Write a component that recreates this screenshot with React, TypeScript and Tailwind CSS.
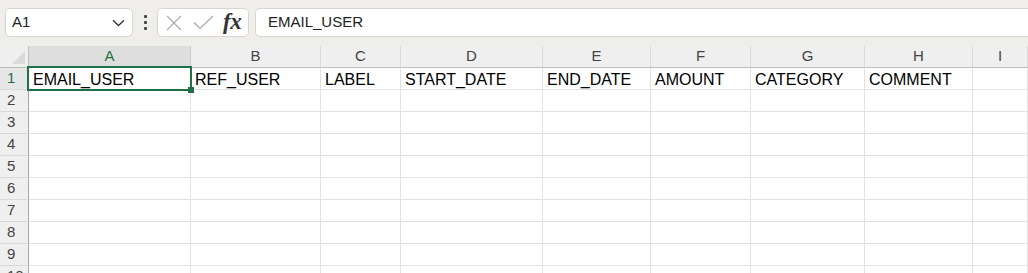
import React from "react";

const cols = [
  { key: "A", w: "w-[162px]" },
  { key: "B", w: "w-[130px]" },
  { key: "C", w: "w-[80px]" },
  { key: "D", w: "w-[142px]" },
  { key: "E", w: "w-[108px]" },
  { key: "F", w: "w-[100px]" },
  { key: "G", w: "w-[114px]" },
  { key: "H", w: "w-[108px]" },
  { key: "I", w: "flex-1" },
];

const headerRow = ["EMAIL_USER", "REF_USER", "LABEL", "START_DATE", "END_DATE", "AMOUNT", "CATEGORY", "COMMENT", ""];

function Toolbar() {
  return (
    <div className="h-[46px] bg-[#f0eeeb] flex items-start pt-[8px] pl-[5px]">
      <div className="w-[128px] h-[29px] bg-white border border-[#d9d6d2] rounded-[5px] flex items-center justify-between pl-[6px] pr-[7px]">
        <span className="text-[15px] text-[#222]">A1</span>
        <svg width="13" height="8" viewBox="0 0 13 8" fill="none">
          <path d="M1 1.2 L6.5 6.5 L12 1.2" stroke="#333" strokeWidth="1.3" />
        </svg>
      </div>
      <div className="w-[24px] h-[29px] flex flex-col items-center justify-center gap-[3px]">
        <span className="w-[3px] h-[3px] bg-[#444] rounded-[1px]"></span>
        <span className="w-[3px] h-[3px] bg-[#444] rounded-[1px]"></span>
        <span className="w-[3px] h-[3px] bg-[#444] rounded-[1px]"></span>
      </div>
      <div className="w-[92px] h-[29px] bg-white border border-[#d9d6d2] rounded-[5px] flex items-center pl-[8px]">
        <svg width="16" height="16" viewBox="0 0 16 16" fill="none">
          <path d="M1 1 L15 15 M15 1 L1 15" stroke="#ababab" strokeWidth="1.2" />
        </svg>
        <svg className="ml-[11px]" width="21" height="15" viewBox="0 0 21 15" fill="none">
          <path d="M1 7.5 L7 13.5 L20 1" stroke="#ababab" strokeWidth="1.2" />
        </svg>
        <span className="ml-[9px] text-[23px] italic font-semibold leading-none text-[#333] font-['Liberation_Serif',serif] -mt-[3px] tracking-[-0.5px]">fx</span>
      </div>
      <div className="ml-[6px] flex-1 h-[29px] bg-white border border-r-0 border-[#d9d6d2] rounded-l-[5px] flex items-center pl-[12px]">
        <span className="text-[15px] text-[#222]">EMAIL_USER</span>
      </div>
    </div>
  );
}

export default function App() {
  const rows = [1, 2, 3, 4, 5, 6, 7, 8, 9, 10];
  return (
    <div className="w-[1028px] h-[273px] overflow-hidden bg-white font-['Liberation_Sans',Arial,sans-serif]">
      <Toolbar />
      {/* column headers */}
      <div className="flex h-[22px]">
        <div className="w-[29px] shrink-0 bg-[#efefef] border-r border-b border-[#bdbdbd] relative">
          <svg className="absolute right-[3px] bottom-[3px]" width="13" height="13" viewBox="0 0 13 13">
            <path d="M13 0 L13 13 L0 13 Z" fill="#dadada" />
          </svg>
        </div>
        {cols.map((c) => (
          <div
            key={c.key}
            className={`${c.w} shrink-0 border-r border-b flex items-center justify-center text-[15px] ${
              c.key === "A" ? "bg-[#dedede] text-[#1e7145] border-r-[#c9c9c9] border-b-[#1e7145]" : "bg-[#efefef] text-[#444] border-r-[#d9d9d9] border-b-[#bdbdbd]"
            }`}
          >
            {c.key}
          </div>
        ))}
      </div>
      {rows.map((r) => (
        <div key={r} className="flex h-[22px]">
          <div
            className={`w-[29px] shrink-0 border-r border-b border-r-[#a6a6a6] flex items-center pl-[7px] text-[15px] ${
              r === 1 ? "bg-[#e6e6e6] text-[#1e7145] border-b-[#d9d9d9]" : "bg-[#efefef] text-[#444] border-b-[#d9d9d9]"
            }`}
          >
            {r}
          </div>
          {cols.map((c, i) => (
            <div
              key={c.key}
              className={`${c.w} shrink-0 border-r border-b border-[#e1e1e1] flex items-center pl-[4px] pt-[2px] text-[16px] text-black whitespace-nowrap relative`}
            >
              {r === 1 ? headerRow[i] : ""}
              {r === 1 && i === 0 && (
                <div className="absolute z-10 -left-[2px] -top-[2px] -right-[2px] -bottom-[2px] border-2 border-[#1e7145] pointer-events-none">
                  <span className="absolute -right-[4px] -bottom-[4px] w-[6px] h-[6px] bg-[#1e7145]"></span>
                </div>
              )}
            </div>
          ))}
        </div>
      ))}
    </div>
  );
}
